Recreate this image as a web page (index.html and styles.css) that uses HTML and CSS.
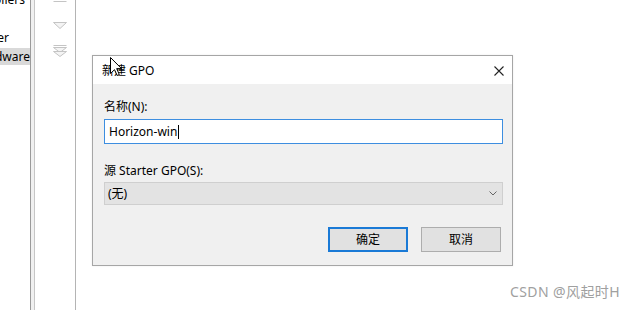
FILE: index.html
```html
<!DOCTYPE html>
<html lang="zh-CN">
<head>
    <meta charset="UTF-8">
    <title>新建 GPO</title>
    <link rel="stylesheet" href="styles.css">
</head>
<body>
    <div class="screen">
        <div class="tree">
            <div class="tree-item shift-top">Domain Controllers</div>
            <div class="tree-item shift-mid"></div>
            <div class="tree-item shift-er">Computer</div>
            <div class="tree-item selected">Hardware</div>
        </div>
        <div class="splitter"></div>
        <div class="toolbar">
            <svg width="16" height="60" viewBox="0 0 16 60">
                <g fill="#f4f4f4" stroke="#c4c4c4" stroke-width="1">
                    <path d="M1.5 -1.5 L14.5 -1.5 M1.5 1.5 L14.5 1.5"/>
                    <path d="M1.5 22.5 L14.5 22.5 L8 28.5 Z"/>
                    <path d="M1.5 45.5 L14.5 45.5"/>
                    <path d="M1.5 47.5 L14.5 47.5 L8 52.5 Z"/>
                    <path d="M1.5 51.5 L14.5 51.5 L8 56.5 Z"/>
                </g>
            </svg>
        </div>
        <div class="desktop">
            <div class="dialog">
                <div class="titlebar">
                    <span class="title">新建 GPO</span>
                    <svg class="close" width="10" height="10" viewBox="0 0 10 10">
                        <path d="M0.5 0.5 L9.5 9.5 M9.5 0.5 L0.5 9.5" stroke="#222" stroke-width="1.1"/>
                    </svg>
                </div>
                <div class="dialog-body">
                    <div class="label">名称(N):</div>
                    <div class="textbox">
                        <span>Horizon-win</span><span class="caret"></span>
                    </div>
                    <div class="label second">源 Starter GPO(S):</div>
                    <div class="combo">
                        <span>(无)</span>
                        <svg width="8" height="5" viewBox="0 0 8 5">
                            <path d="M0.5 0.5 L4 4 L7.5 0.5" fill="none" stroke="#666" stroke-width="1"/>
                        </svg>
                    </div>
                    <div class="buttons">
                        <div class="btn default">确定</div>
                        <div class="btn">取消</div>
                    </div>
                </div>
            </div>
        </div>

        <svg class="cursor" width="12" height="19" viewBox="0 0 12 19">
            <path d="M0.5 0.5 L0.5 16.5 L4.5 12.7 L7.2 18.5 L9.3 17.5 L6.7 11.6 L11.5 11.6 Z" fill="#fff" stroke="#000" stroke-width="1"/>
        </svg>
        <div class="watermark">CSDN @风起时H</div>
    </div>
</body>
</html>
```

FILE: styles.css
```css
* {
    margin: 0;
    padding: 0;
    box-sizing: border-box;
}

body {
    font-family: "Noto Sans", "Noto Sans CJK SC", sans-serif;
    font-size: 12px;
    color: #000;
    background: #fff;
}

.screen {
    position: relative;
    display: flex;
    width: 642px;
    height: 310px;
    overflow: hidden;
}

/* left tree pane, scrolled so only the ends of the names show */
.tree {
    width: 30px;
    flex-shrink: 0;
    overflow: hidden;
    margin-top: -10px;
}

.tree-item {
    display: flex;
    justify-content: flex-end;
    height: 19px;
    line-height: 19px;
    white-space: nowrap;
}

.shift-top {
    padding-right: 5px;
}

.shift-er {
    padding-right: 21px;
}

.selected {
    background: #d9d9d9;
    height: 17px;
    line-height: 17px;
    margin-top: 1px;
}

.splitter {
    width: 5px;
    flex-shrink: 0;
    border-left: 1px solid #9a9a9a;
    border-right: 1px solid #c6c6c6;
    background: #f0f0f0;
}

.toolbar {
    width: 41px;
    flex-shrink: 0;
    border-right: 1px solid #b4b4b4;
    padding-left: 17px;
}

.toolbar svg {
    display: block;
}

.desktop {
    flex: 1;
    padding: 55px 0 0 16px;
}

.dialog {
    width: 421px;
    height: 211px;
    border: 1px solid #a6a6a6;
    background: #f0f0f0;
    box-shadow: 0 0 2px rgba(0, 0, 0, 0.08);
}

.titlebar {
    height: 28px;
    background: #fff;
    display: flex;
    align-items: center;
    justify-content: space-between;
    padding: 0 8px 0 9px;
}

.title {
    font-size: 12px;
    line-height: 16px;
    margin-top: 1px;
}

.close {
    display: block;
    margin-top: 1px;
}

.dialog-body {
    padding: 15px 9px 13px 11px;
}

.label {
    line-height: 16px;
    height: 16px;
}

.label.second {
    margin-top: 19px;
}

.textbox {
    margin-top: 4px;
    height: 25px;
    border: 1px solid #3d8ee0;
    background: #fff;
    display: flex;
    align-items: center;
    padding-left: 4px;
    line-height: 16px;
}

.caret {
    display: inline-block;
    width: 1px;
    height: 14px;
    background: #000;
    margin-left: 1px;
}

.combo {
    margin-top: 3px;
    height: 23px;
    border: 1px solid #cfcfcf;
    background: #e3e3e3;
    display: flex;
    align-items: center;
    justify-content: space-between;
    padding: 0 5px 0 3px;
    line-height: 16px;
}

.combo svg {
    display: block;
}

.buttons {
    margin-top: 22px;
    margin-right: 2px;
    display: flex;
    justify-content: flex-end;
    gap: 13px;
}

.btn {
    width: 80px;
    height: 25px;
    border: 1px solid #adadad;
    background: #e1e1e1;
    display: flex;
    align-items: center;
    justify-content: center;
    line-height: 16px;
}

.btn.default {
    border: 2px solid #1a7ad6;
}

.cursor {
    position: absolute;
    left: 110px;
    top: 57px;
}

.watermark {
    position: absolute;
    left: 510px;
    top: 283px;
    font-size: 14px;
    line-height: 18px;
    letter-spacing: 0.4px;
    color: #a0a0a0;
    white-space: nowrap;
}
```
